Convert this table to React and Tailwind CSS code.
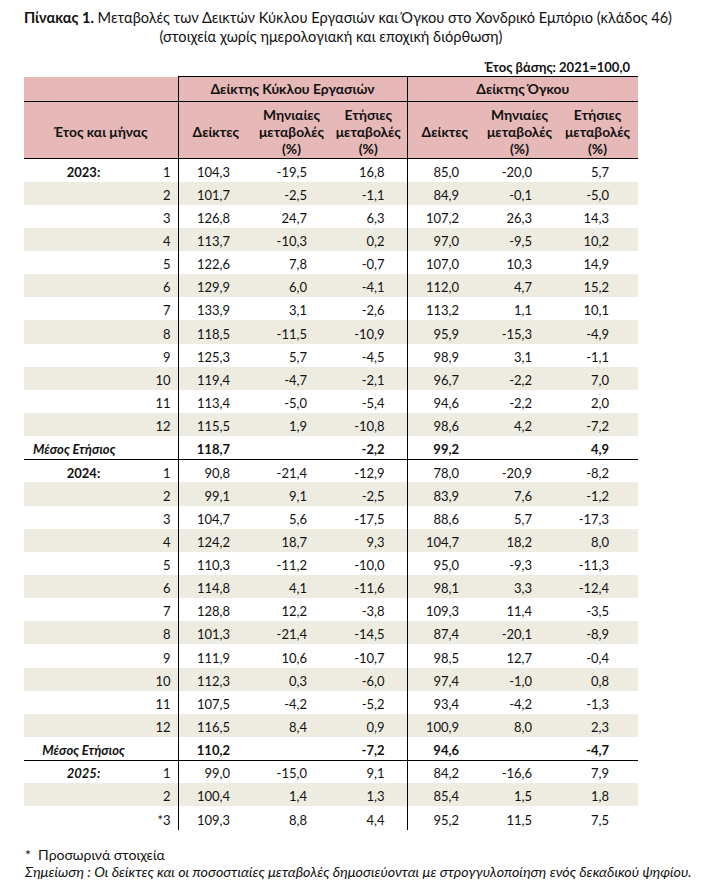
import React from "react";

const rows2023 = [
  ["1", "104,3", "-19,5", "16,8", "85,0", "-20,0", "5,7"],
  ["2", "101,7", "-2,5", "-1,1", "84,9", "-0,1", "-5,0"],
  ["3", "126,8", "24,7", "6,3", "107,2", "26,3", "14,3"],
  ["4", "113,7", "-10,3", "0,2", "97,0", "-9,5", "10,2"],
  ["5", "122,6", "7,8", "-0,7", "107,0", "10,3", "14,9"],
  ["6", "129,9", "6,0", "-4,1", "112,0", "4,7", "15,2"],
  ["7", "133,9", "3,1", "-2,6", "113,2", "1,1", "10,1"],
  ["8", "118,5", "-11,5", "-10,9", "95,9", "-15,3", "-4,9"],
  ["9", "125,3", "5,7", "-4,5", "98,9", "3,1", "-1,1"],
  ["10", "119,4", "-4,7", "-2,1", "96,7", "-2,2", "7,0"],
  ["11", "113,4", "-5,0", "-5,4", "94,6", "-2,2", "2,0"],
  ["12", "115,5", "1,9", "-10,8", "98,6", "4,2", "-7,2"],
];
const rows2024 = [
  ["1", "90,8", "-21,4", "-12,9", "78,0", "-20,9", "-8,2"],
  ["2", "99,1", "9,1", "-2,5", "83,9", "7,6", "-1,2"],
  ["3", "104,7", "5,6", "-17,5", "88,6", "5,7", "-17,3"],
  ["4", "124,2", "18,7", "9,3", "104,7", "18,2", "8,0"],
  ["5", "110,3", "-11,2", "-10,0", "95,0", "-9,3", "-11,3"],
  ["6", "114,8", "4,1", "-11,6", "98,1", "3,3", "-12,4"],
  ["7", "128,8", "12,2", "-3,8", "109,3", "11,4", "-3,5"],
  ["8", "101,3", "-21,4", "-14,5", "87,4", "-20,1", "-8,9"],
  ["9", "111,9", "10,6", "-10,7", "98,5", "12,7", "-0,4"],
  ["10", "112,3", "0,3", "-6,0", "97,4", "-1,0", "0,8"],
  ["11", "107,5", "-4,2", "-5,2", "93,4", "-4,2", "-1,3"],
  ["12", "116,5", "8,4", "0,9", "100,9", "8,0", "2,3"],
];
const rows2025 = [
  ["1", "99,0", "-15,0", "9,1", "84,2", "-16,6", "7,9"],
  ["2", "100,4", "1,4", "1,3", "85,4", "1,5", "1,8"],
  ["*3", "109,3", "8,8", "4,4", "95,2", "11,5", "7,5"],
];

const padR = ["pr-[23px]", "pr-[23px]", "pr-[22px]", "pr-[23px]", "pr-[25px]", "pr-[29px]"];
const bordR = ["", "", "border-r border-black", "", "", ""];

function DataRow({ year, yearCls, r, idx }) {
  const beige = idx % 2 === 1;
  return (
    <tr className={`h-[23.15px] ${beige ? "bg-[#eeece1]" : "bg-white"}`}>
      <td className={`p-0 pt-[3px] text-center font-bold ${yearCls || ""}`}>{year}</td>
      <td className="p-0 pt-[3px] pr-[7px] text-right border-r border-black">{r[0]}</td>
      {r.slice(1).map((v, i) => (
        <td key={i} className={`p-0 pt-[3px] text-right ${padR[i]} ${bordR[i]}`}>
          {v}
        </td>
      ))}
    </tr>
  );
}

function MeanRow({ vals, labelCls }) {
  return (
    <tr className="h-[23.15px] bg-white border-b border-black">
      <td className={`p-0 pt-[3px] font-bold italic whitespace-nowrap ${labelCls}`}>Μέσος Ετήσιος</td>
      <td className="p-0 border-r border-black"></td>
      <td className={`p-0 pt-[3px] text-right font-bold ${padR[0]}`}>{vals[0]}</td>
      <td className="p-0"></td>
      <td className={`p-0 pt-[3px] text-right font-bold border-r border-black ${padR[2]}`}>{vals[1]}</td>
      <td className={`p-0 pt-[3px] text-right font-bold ${padR[3]}`}>{vals[2]}</td>
      <td className="p-0"></td>
      <td className={`p-0 pt-[3px] text-right font-bold ${padR[5]}`}>{vals[3]}</td>
    </tr>
  );
}

export default function App() {
  return (
    <div
      className="w-[702px] h-[892px] bg-white text-[#111] overflow-hidden"
      style={{ fontFamily: "Lato, 'Noto Sans', sans-serif" }}
    >
      <div className="pt-[8px] text-[14.6px] leading-[19px]">
        <div className="pl-[24px] whitespace-nowrap">
          <span className="font-bold">Πίνακας 1.</span> Μεταβολές των Δεικτών Κύκλου Εργασιών και Όγκου στο Χονδρικό Εμπόριο (κλάδος 46)
        </div>
        <div className="text-center w-[662px]">(στοιχεία χωρίς ημερολογιακή και εποχική διόρθωση)</div>
      </div>
      <div className="w-[630px] mt-[13px] text-right text-[13px] font-bold leading-[17px]">
        Έτος βάσης: 2021=100,0
      </div>
      <table className="ml-[24px] w-[614px] table-fixed border-collapse text-[13px] leading-[16px]">
        <colgroup>
          <col className="w-[119px]" />
          <col className="w-[35px]" />
          <col className="w-[75px]" />
          <col className="w-[77px]" />
          <col className="w-[77px]" />
          <col className="w-[75px]" />
          <col className="w-[75px]" />
          <col className="w-[81px]" />
        </colgroup>
        <thead className="bg-[#e6b8b7] font-bold text-[13.8px]">
          <tr className="h-[25px] border-b border-black">
            <td colSpan={2} className="p-0 border-r border-black"></td>
            <td colSpan={3} className="p-0 text-center border-r border-t border-black">
              Δείκτης Κύκλου Εργασιών
            </td>
            <td colSpan={3} className="p-0 text-center border-t border-black">
              Δείκτης Όγκου
            </td>
          </tr>
          <tr className="h-[57px] border-b border-black">
            <td colSpan={2} className="p-0 pt-[3px] text-center border-r border-black">Έτος και μήνας</td>
            <td className="p-0 pt-[3px] text-center">Δείκτες</td>
            <td className="p-0 pt-[3px] text-center leading-[17px]">Μηνιαίες<br />μεταβολές<br />(%)</td>
            <td className="p-0 pt-[3px] text-center leading-[17px] border-r border-black">Ετήσιες<br />μεταβολές<br />(%)</td>
            <td className="p-0 pt-[3px] text-center">Δείκτες</td>
            <td className="p-0 pt-[3px] text-center leading-[17px]">Μηνιαίες<br />μεταβολές<br />(%)</td>
            <td className="p-0 pt-[3px] text-center leading-[17px]">Ετήσιες<br />μεταβολές<br />(%)</td>
          </tr>
        </thead>
        <tbody>
          {rows2023.map((r, i) => (
            <DataRow key={"a" + i} year={i === 0 ? "2023:" : ""} r={r} idx={i} />
          ))}
          <MeanRow vals={["118,7", "-2,2", "99,2", "4,9"]} labelCls="text-left pl-[9px]" />
          {rows2024.map((r, i) => (
            <DataRow key={"b" + i} year={i === 0 ? "2024:" : ""} r={r} idx={i} />
          ))}
          <MeanRow vals={["110,2", "-7,2", "94,6", "-4,7"]} labelCls="text-center" />
          {rows2025.map((r, i) => (
            <DataRow key={"c" + i} year={i === 0 ? "2025:" : ""} yearCls="italic" r={r} idx={i} />
          ))}
        </tbody>
      </table>
      <div className="pl-[25px] mt-[16px] text-[14px] leading-[17px]">
        <div>*&nbsp; Προσωρινά στοιχεία</div>
        <div className="italic whitespace-nowrap text-[14.3px]">
          Σημείωση : Οι δείκτες και οι ποσοστιαίες μεταβολές δημοσιεύονται με στρογγυλοποίηση ενός δεκαδικού ψηφίου.
        </div>
      </div>
    </div>
  );
}
